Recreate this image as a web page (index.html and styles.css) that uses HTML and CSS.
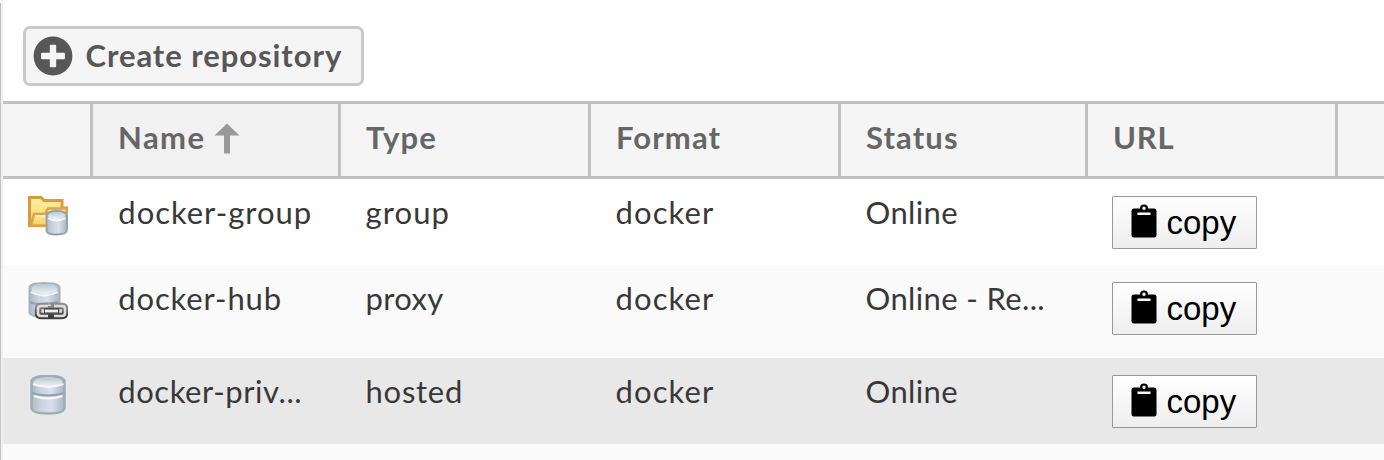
FILE: index.html
```html
<!DOCTYPE html>
<html lang="en">
<head>
<meta charset="utf-8">
<title>Repositories</title>
<link rel="stylesheet" href="styles.css">
</head>
<body>
<svg class="defs" width="0" height="0">
  <defs>
    <linearGradient id="metal"><stop offset="0" stop-color="#aebac4"/><stop offset=".3" stop-color="#cbd3df"/><stop offset=".6" stop-color="#d9dfec"/><stop offset="1" stop-color="#a9b5bf"/></linearGradient>
    <linearGradient id="lid" x2="0" y2="1"><stop offset="0" stop-color="#b9c8d2"/><stop offset="1" stop-color="#edf3f7"/></linearGradient>
    <linearGradient id="gold" x2="0" y2="1"><stop offset="0" stop-color="#fff0a8"/><stop offset="1" stop-color="#fbd264"/></linearGradient>
    <linearGradient id="steel" x2="0" y2="1"><stop offset="0" stop-color="#8c8c8c"/><stop offset="1" stop-color="#3e3e3e"/></linearGradient>
    <filter id="soft" x="-10%" y="-10%" width="120%" height="120%"><feGaussianBlur stdDeviation=".75"/></filter>
    <symbol id="clipboard" viewBox="0 0 26 34">
      <path fill-rule="evenodd" d="M3 4.500H9A4 4 0 0 1 17 4.500H23Q25.500 4.500 25.500 7V31Q25.500 33.500 23 33.500H3Q.5 33.500 .5 31V7Q.5 4.500 3 4.500ZM13 2.500A1.700 1.700 0 1 0 13 5.900A1.700 1.700 0 1 0 13 2.500ZM6.500 8.500V11H19.500V8.500Z"/>
    </symbol>
  </defs>
</svg>
<main class="panel">
  <div class="toolbar">
    <button class="create">
      <svg width="40" height="40" viewBox="0 0 40 40"><circle cx="20" cy="20" r="19.400" fill="#575757"/><path d="M17.800 8.700h4.400q1 0 1 1v7h7.700q1 0 1 1v4.600q0 1-1 1h-7.700v7q0 1-1 1h-4.400q-1 0-1-1v-7H9.100q-1 0-1-1v-4.600q0-1 1-1h7.700v-7q0-1 1-1z" fill="#f5f5f5"/></svg>
      <span>Create repository</span>
    </button>
  </div>
  <div class="grid header">
    <div class="cell"></div>
    <div class="cell sorted"><span class="h-name">Name</span><svg class="arrow" width="26" height="32" viewBox="0 0 26 32"><path d="M13 .5L25.500 12.500H16V30.500H10V12.500H.5Z" fill="#999" filter="url(#soft)"/></svg></div>
    <div class="cell"><span>Type</span></div>
    <div class="cell"><span>Format</span></div>
    <div class="cell"><span>Status</span></div>
    <div class="cell"><span class="h-url">URL</span></div>
    <div class="cell"></div>
  </div>
  <div class="grid row">
    <div class="icon"><svg width="40" height="40" viewBox="0 0 40 40"><g filter="url(#soft)">
      <path d="M1.500 1.500H13L16 4.500H34V12H38.500V29.500H1.500Z" fill="url(#gold)" stroke="#d99a3e" stroke-width="3"/>
      <path d="M6 18H17L20 12.500H38.500V29.500H3Z" fill="url(#gold)" stroke="#dea546" stroke-width="2.600"/>
      <path d="M7 20H17" stroke="#fff3c0" stroke-width="2"/>
      <path d="M18.500 20Q18.500 15 28.500 15T39 20V34Q39 38.500 28.500 38.500T18.500 34Z" fill="url(#metal)" stroke="#91a2af" stroke-width="1.800"/>
      <ellipse cx="28.700" cy="19.500" rx="8.500" ry="3.400" fill="url(#lid)"/><path d="M20 22Q28.500 27 37.500 22" stroke="#f6f9fc" stroke-width="2" fill="none"/></g></svg></div>
    <div class="text t-group">docker-group</div><div class="text wide">group</div><div class="text wide">docker</div><div class="text">Online</div>
    <div class="action"><button class="copy"><svg width="26" height="34"><use href="#clipboard"/></svg><span>copy</span></button></div><div></div>
  </div>
  <div class="grid row alt">
    <div class="icon"><svg width="40" height="40" viewBox="0 0 40 40"><g filter="url(#soft)">
      <path d="M1.500 6Q1.500 1 16.500 1T31.500 6V31Q30 35 16.500 35T1.500 31Z" fill="url(#metal)" stroke="#a3b3bf" stroke-width="2"/>
      <ellipse cx="16.500" cy="7" rx="13" ry="5" fill="url(#lid)"/><path d="M3 10Q16 17 30 10" stroke="#f6f9fc" stroke-width="1.800" fill="none"/><path d="M2 20Q10 24 30 20" stroke="#91a3b1" stroke-width="2" fill="none"/>
      <g fill="none" stroke="url(#steel)" stroke-width="6.400"><path d="M20 24H13Q10 24 10 27V31Q10 34 13 34H20V31.500M26 26V24H34Q37 24 37 27V31Q37 34 34 34H26V31.500M20 26V24"/></g>
      <path d="M16 29H31" stroke="#4d4d4d" stroke-width="6"/>
      <g fill="none" stroke="#ddd" stroke-width="2.600"><path d="M20 24H13Q10 24 10 27V31Q10 34 13 34H20M26 24H34Q37 24 37 27V31Q37 34 34 34H26"/></g>
      <path d="M17 29H30" stroke="#eee" stroke-width="2.800"/></g></svg></div>
    <div class="text t-hub">docker-hub</div><div class="text">proxy</div><div class="text wide">docker</div><div class="text">Online - Re...</div>
    <div class="action"><button class="copy"><svg width="26" height="34"><use href="#clipboard"/></svg><span>copy</span></button></div><div></div>
  </div>
  <div class="grid row selected">
    <div class="icon"><svg width="40" height="40" viewBox="0 0 40 40"><g filter="url(#soft)">
      <path d="M3.500 6Q5 1 20 1T36.500 6V33Q36 38.500 20 38.500T3.500 33Z" fill="url(#metal)" stroke="#9dacb5" stroke-width="2.400"/>
      <ellipse cx="20" cy="7" rx="14" ry="4.500" fill="url(#lid)"/><path d="M5 9Q20 15 35.500 9" stroke="#f3f7fa" stroke-width="2" fill="none"/>
      <path d="M4 18Q20 23 36.500 18" stroke="#91a3ad" stroke-width="2.200" fill="none"/><path d="M6 21Q20 26 34.500 21" stroke="#f6f9fc" stroke-width="2.200" fill="none"/></g></svg></div>
    <div class="text t-priv">docker-priv...</div><div class="text t-hosted">hosted</div><div class="text wide">docker</div><div class="text">Online</div>
    <div class="action"><button class="copy"><svg width="26" height="34"><use href="#clipboard"/></svg><span>copy</span></button></div><div></div>
  </div>
  <div class="rest"></div>
</main>
</body>
</html>
```
FILE: styles.css
```css
* { box-sizing: border-box; }
body { margin: 0; background: #fff; font-family: Lato, "Open Sans", sans-serif; overflow: hidden; }
.defs { display: block; height: 0; }
.panel { height: 460px; padding-left: 3px; display: flex; flex-direction: column; background: linear-gradient(#c2c2c2, #c2c2c2) 0 3px / 1px 457px no-repeat, linear-gradient(#f0f0f0, #f0f0f0) 1px 0 / 2px 460px no-repeat, #fff; }
.toolbar { height: 101px; padding: 26px 20px 0; }
.create { display: flex; align-items: center; gap: 12.5px; width: 341px; height: 60px; padding: 0 0 0 7px; border: 3px solid #c9c9c9; border-radius: 7px; background: #f5f5f5; color: #575757; font: bold 31px/40px Lato, sans-serif; letter-spacing: .93px; white-space: nowrap; }
.create svg { flex: none; }
.create span { padding-bottom: 3px; }
.grid { display: grid; grid-template-columns: 90px 248px 250px 250px 247px 250px 1fr; flex: none; }
.header { height: 78px; border: solid #c1c1c1; border-width: 3px 0; background: #f5f5f5; color: #666; font: bold 31px/40px Lato, sans-serif; letter-spacing: 1.1px; }
.cell { display: flex; padding: 13px 0 0 25px; border-right: 3px solid #c1c1c1; }
.cell:last-child { border-right: 0; }
.sorted { background: #f1f1f1; }
.h-name { letter-spacing: 1.4px; }
.h-url { letter-spacing: .8px; }
.arrow { margin: 6px 0 0 9px; }
.row { height: 86px; font-size: 31px; line-height: 40px; color: #383838; }
.alt { height: 93px; background: #fafafa; }
.selected { background: #e8e8e8; }
.text { padding: 13px 0 0 24.5px; white-space: nowrap; letter-spacing: .37px; }
.wide { letter-spacing: 1.1px; }
.t-group, .t-hub, .t-priv { padding-left: 25.3px; }
.t-group { letter-spacing: .97px; }
.t-hub { letter-spacing: .85px; }
.t-priv { letter-spacing: .55px; }
.t-hosted { letter-spacing: .75px; }
.icon { padding: 17px 0 0 25px; }
.icon svg { display: block; }
.action { padding: 17px 0 0 24px; }
.copy { display: flex; align-items: center; gap: 9.5px; width: 145px; height: 53px; padding: 0 0 0 18px; border: 1px solid #999; border-radius: 1px; background: linear-gradient(#fff, #eee); color: #000; font: 33px/40px "Liberation Sans", Arial, sans-serif; }
.copy svg { margin-bottom: 3px; }
.rest { flex: 1; background: #fafafa; }
```
